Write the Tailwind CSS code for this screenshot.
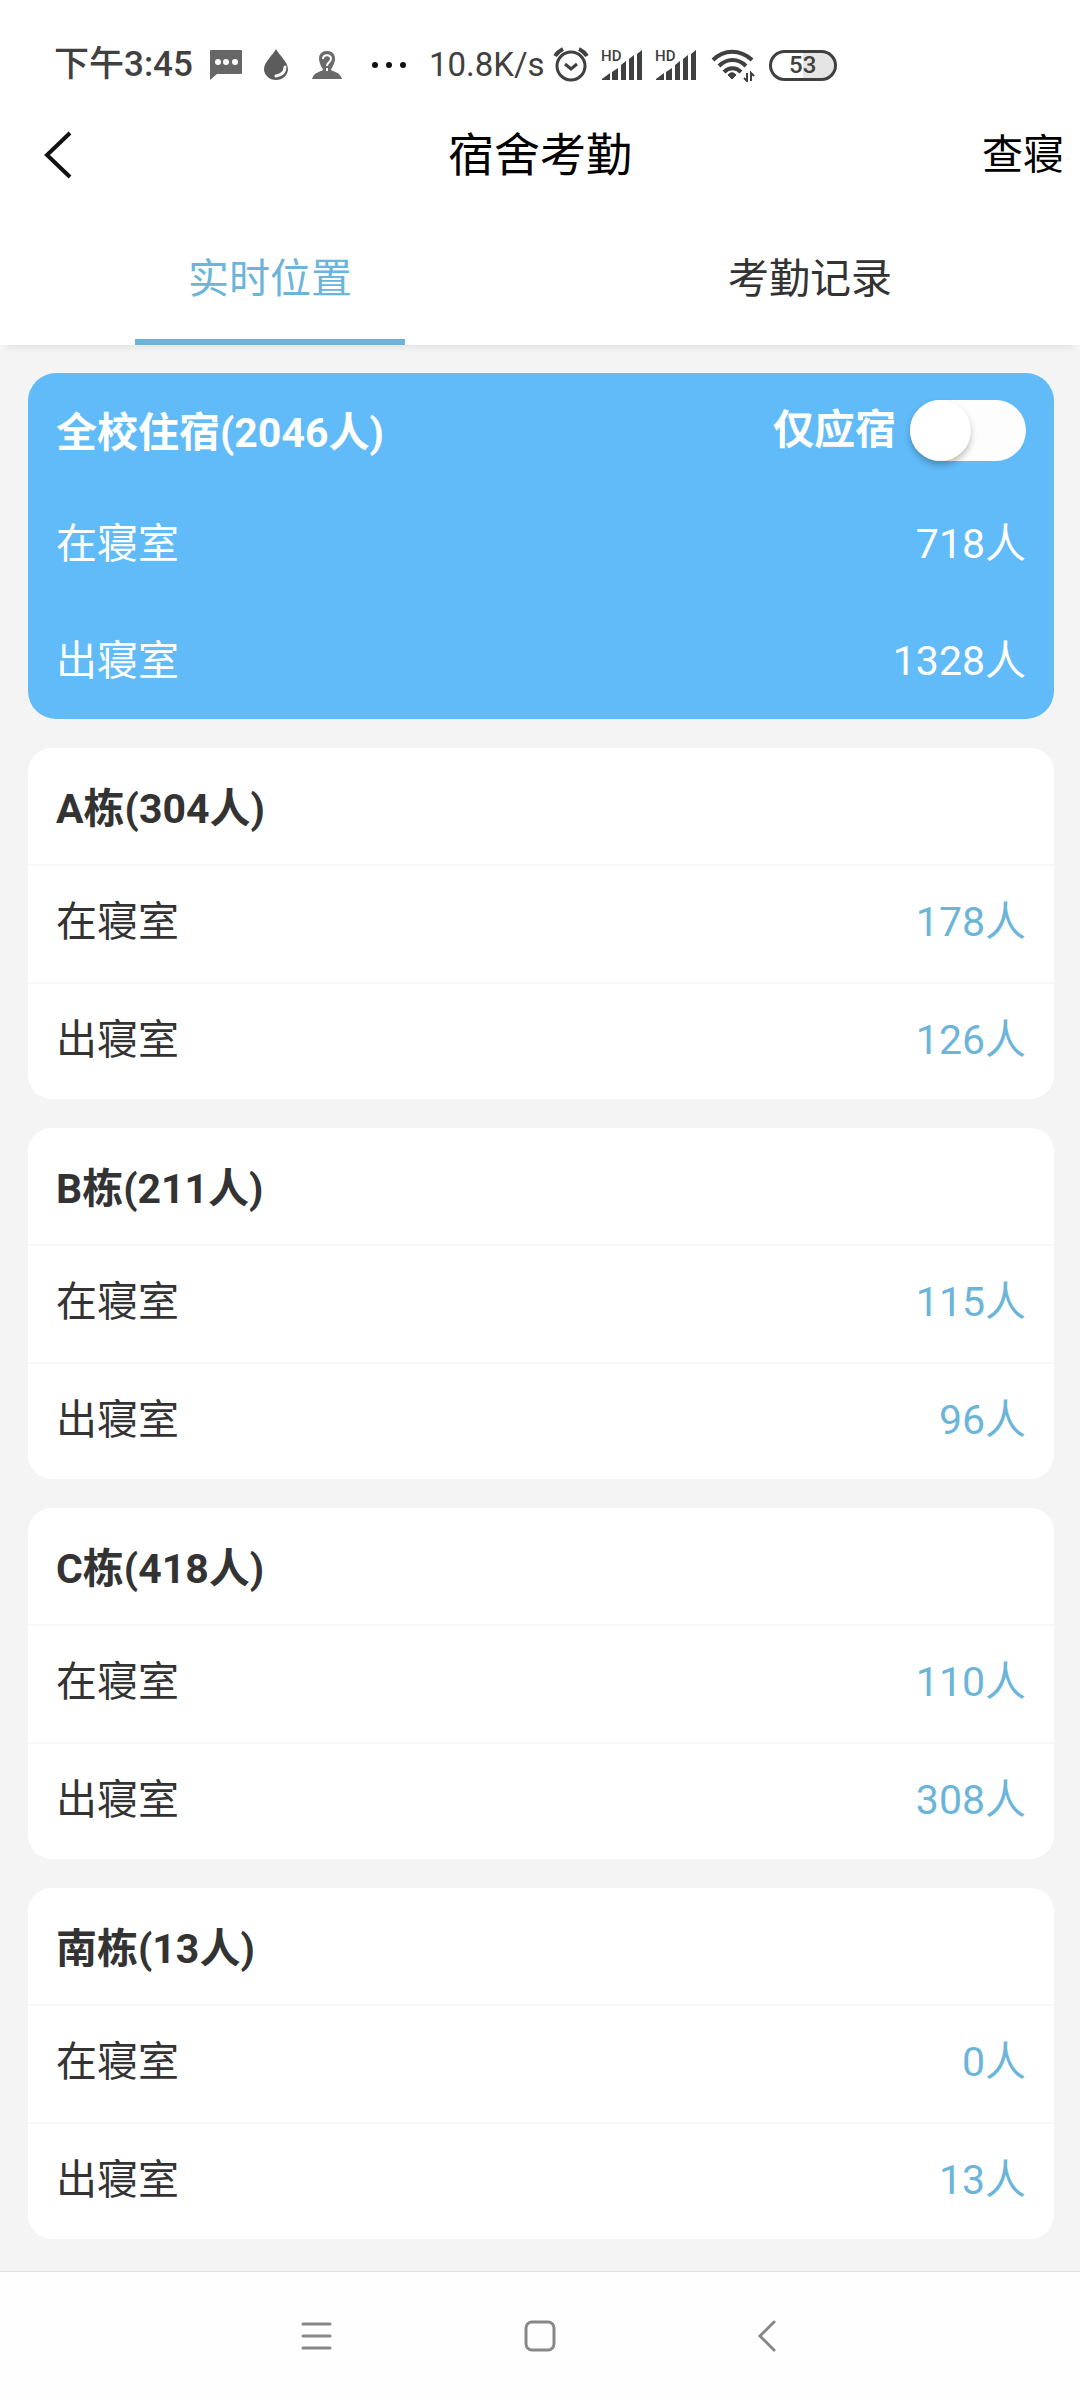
<!DOCTYPE html>
<html lang="zh-CN">
<head>
  <meta charset="UTF-8">
  <meta name="viewport" content="width=device-width, initial-scale=1.0">
  <title>宿舍考勤</title>
  <script src="https://cdn.jsdelivr.net/npm/@tailwindcss/browser@4"></script>
</head>
<body class="min-h-screen flex flex-col bg-white text-[#333] text-[41px] leading-[60px] font-[Roboto,'Noto_Sans_CJK_SC',sans-serif]">

  <!-- Status bar -->
  <div class="flex items-center px-[54px] pt-[41px] pb-[19px] text-[35px] leading-[48px] text-[#404040]">
    <span class="font-medium">下午3:45</span>
    <svg class="ml-[16px] w-[34px] h-[32px]" viewBox="0 0 34 32">
      <path d="M2 1h30a1 1 0 0 1 1 1v22a1 1 0 0 1-1 1H8l-7 6V2a1 1 0 0 1 1-1z" fill="#666"/>
      <circle cx="9" cy="13" r="3" fill="#fff"/><circle cx="17" cy="13" r="3" fill="#fff"/><circle cx="26" cy="13" r="3" fill="#fff"/>
    </svg>
    <svg class="ml-[20px] w-[26px] h-[32px]" viewBox="0 0 26 32">
      <path d="M13 0C10 6 1 13 1 20a12 11 0 0 0 24 0C25 13 16 6 13 0z" fill="#5c5c5c"/>
      <path d="M22 18c0 5-3 8-9 9" fill="none" stroke="#fff" stroke-width="3" stroke-linecap="round"/>
    </svg>
    <svg class="ml-[22px] w-[32px] h-[32px]" viewBox="0 0 32 32">
      <path d="M10 17C6 9 8 2 16 2s10 7 6 15c-1 2-2 3-2 4 3 2 9 2 11 9H1c2-7 8-7 11-9 0-1-1-2-2-4z" fill="#6a6a6a"/>
      <path d="M12 10c0-5 8-5 8 0 0 3-4 3-4 7M16 19v3" fill="none" stroke="#fff" stroke-width="2"/>
    </svg>
    <svg class="ml-[28px] w-[36px] h-[32px]" viewBox="0 0 36 32" fill="#111">
      <circle cx="4" cy="16" r="3"/><circle cx="18" cy="16" r="3"/><circle cx="32" cy="16" r="3"/>
    </svg>
    <span class="ml-[22px] text-[33px]">10.8K/s</span>
    <svg class="ml-[8px] w-[36px] h-[36px]" viewBox="0 0 36 36" fill="none" stroke="#404040" stroke-width="3">
      <circle cx="18" cy="19" r="14"/>
      <path d="M12 17l6 5 6-5"/>
      <path d="M2 9c2-3 4-5 8-7M34 9c-2-3-4-5-8-7" stroke-width="4"/>
    </svg>
    <svg class="ml-[12px] w-[42px] h-[40px]" viewBox="0 -3 42 40" fill="#404040">
      <text x="0" y="13" font-size="15" font-weight="500">HD</text>
      <path d="M1 31l8-6v7H1zM11 24l6-4v12h-6zM20 17l5-4v19h-5zM28 11l5-4v25h-5zM36 6l5-4v30h-5z"/>
    </svg>
    <svg class="ml-[12px] w-[42px] h-[40px]" viewBox="0 -3 42 40" fill="#404040">
      <text x="0" y="13" font-size="15" font-weight="500">HD</text>
      <path d="M1 31l8-6v7H1zM11 24l6-4v12h-6zM20 17l5-4v19h-5zM28 11l5-4v25h-5zM36 6l5-4v30h-5z"/>
    </svg>
    <svg class="ml-[14px] w-[44px] h-[34px]" viewBox="0 0 44 34" fill="none" stroke="#404040" stroke-width="4">
      <path d="M2 12C13 1 29 1 41 12M8 18c8-8 19-8 27 0M13 24c5-5 12-5 17 0"/>
      <path d="M21 31l-4-4c2-3 6-3 8 0z" fill="#404040" stroke-width="1"/>
      <path d="M36 25v8l-3-3M40 33v-8l3 3" stroke-width="2"/>
    </svg>
    <span class="ml-[14px] w-[68px] h-[31px] flex items-center justify-center rounded-full border-3 border-[#404040] bg-linear-to-r from-white from-50% to-[#e5e5e5] to-50% text-[24px] leading-[24px] font-medium">53</span>
  </div>

  <!-- Header -->
  <header class="grid grid-cols-3 items-center px-4 pt-[17px] pb-[15px] text-black">
    <button type="button" aria-label="返回" class="ml-[28px] justify-self-start">
      <svg class="w-[28px] h-[48px]" viewBox="0 0 28 48" fill="none" stroke="#111" stroke-width="4">
        <path d="M26 2L3 24l23 22"/>
      </svg>
    </button>
    <h1 class="text-center text-[46px]">宿舍考勤</h1>
    <a href="#" class="justify-self-end">查寝</a>
  </header>

  <!-- Tabs -->
  <nav class="relative z-10 grid grid-cols-2 bg-white shadow-[0_8px_8px_-6px_rgba(0,0,0,0.08)]">
    <a href="#" class="flex flex-col items-center pt-[49px] text-[#6cb5da]">
      实时位置
      <span class="mt-[30px] w-1/2 h-[6px] bg-[#6cb5da]"></span>
    </a>
    <a href="#" class="flex flex-col items-center pt-[49px]">考勤记录</a>
  </nav>

  <!-- Main Content -->
  <main class="flex-1 bg-[#f4f4f4] pl-[28px] pr-[26px] pt-[28px] pb-[27px] space-y-[29px]">

    <!-- Whole school -->
    <section class="rounded-[28px] bg-[#60bbf8] px-[28px] text-white">
      <div class="flex items-center justify-between pt-[24px] pb-[22px] font-bold">
        <h2 class="pt-[6px]">全校住宿(2046人)</h2>
        <label class="flex items-center gap-[14px]">
          仅应宿
          <input type="checkbox" role="switch" class="appearance-none w-[116px] h-[61px] rounded-full bg-[#fdfdfd] before:block before:size-[61px] before:rounded-full before:bg-white before:shadow-[0_4px_6px_rgba(0,0,0,0.25)] checked:before:ml-[55px]">
        </label>
      </div>
      <dl>
        <div class="flex justify-between pt-[29px] pb-[28px]"><dt>在寝室</dt><dd>718人</dd></div>
        <div class="flex justify-between pt-[29px] pb-[28px]"><dt>出寝室</dt><dd>1328人</dd></div>
      </dl>
    </section>

    <!-- Building A -->
    <section class="rounded-[24px] bg-white">
      <h2 class="px-[28px] pt-[31px] pb-[25px] font-bold">A栋(304人)</h2>
      <dl>
        <div class="flex justify-between border-t-2 border-[#f7f7f7] px-[28px] pt-[26px] pb-[30px]"><dt>在寝室</dt><dd class="text-[#6cb5da]">178人</dd></div>
        <div class="flex justify-between border-t-2 border-[#f7f7f7] px-[28px] pt-[26px] pb-[29px]"><dt>出寝室</dt><dd class="text-[#6cb5da]">126人</dd></div>
      </dl>
    </section>

    <!-- Building B -->
    <section class="rounded-[24px] bg-white">
      <h2 class="px-[28px] pt-[31px] pb-[25px] font-bold">B栋(211人)</h2>
      <dl>
        <div class="flex justify-between border-t-2 border-[#f7f7f7] px-[28px] pt-[26px] pb-[30px]"><dt>在寝室</dt><dd class="text-[#6cb5da]">115人</dd></div>
        <div class="flex justify-between border-t-2 border-[#f7f7f7] px-[28px] pt-[26px] pb-[29px]"><dt>出寝室</dt><dd class="text-[#6cb5da]">96人</dd></div>
      </dl>
    </section>

    <!-- Building C -->
    <section class="rounded-[24px] bg-white">
      <h2 class="px-[28px] pt-[31px] pb-[25px] font-bold">C栋(418人)</h2>
      <dl>
        <div class="flex justify-between border-t-2 border-[#f7f7f7] px-[28px] pt-[26px] pb-[30px]"><dt>在寝室</dt><dd class="text-[#6cb5da]">110人</dd></div>
        <div class="flex justify-between border-t-2 border-[#f7f7f7] px-[28px] pt-[26px] pb-[29px]"><dt>出寝室</dt><dd class="text-[#6cb5da]">308人</dd></div>
      </dl>
    </section>

    <!-- South building -->
    <section class="rounded-[24px] bg-white">
      <h2 class="px-[28px] pt-[31px] pb-[25px] font-bold">南栋(13人)</h2>
      <dl>
        <div class="flex justify-between border-t-2 border-[#f7f7f7] px-[28px] pt-[26px] pb-[30px]"><dt>在寝室</dt><dd class="text-[#6cb5da]">0人</dd></div>
        <div class="flex justify-between border-t-2 border-[#f7f7f7] px-[28px] pt-[26px] pb-[29px]"><dt>出寝室</dt><dd class="text-[#6cb5da]">13人</dd></div>
      </dl>
    </section>
  </main>

  <!-- System navigation -->
  <footer class="flex justify-center gap-48 border-t border-[#e2e2e2] bg-[#fefefe] py-12">
    <button type="button" aria-label="菜单">
      <svg class="w-[32px] h-[32px]" viewBox="0 0 32 32" fill="none" stroke="#888" stroke-width="3" stroke-linecap="round">
        <path d="M3 4h27M3 16h27M3 28h27"/>
      </svg>
    </button>
    <button type="button" aria-label="主页">
      <svg class="w-[32px] h-[32px]" viewBox="0 0 32 32" fill="none" stroke="#888" stroke-width="3">
        <rect x="2" y="2" width="28" height="28" rx="6"/>
      </svg>
    </button>
    <button type="button" aria-label="后退">
      <svg class="w-[32px] h-[32px]" viewBox="0 0 32 32" fill="none" stroke="#888" stroke-width="3" stroke-linecap="round">
        <path d="M26 2L12 16l14 14"/>
      </svg>
    </button>
  </footer>

</body>
</html>
